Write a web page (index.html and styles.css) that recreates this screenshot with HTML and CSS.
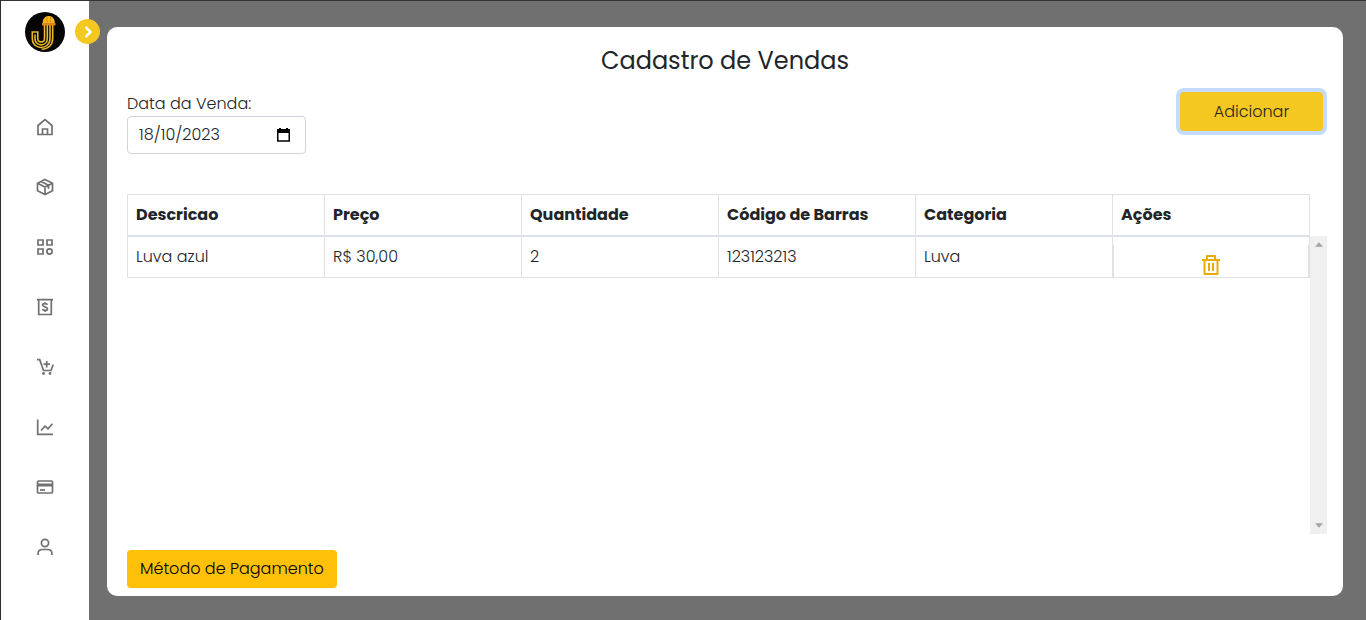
FILE: index.html
```html
<!DOCTYPE html>
<html lang="pt-BR">
<head>
<meta charset="utf-8">
<meta name="viewport" content="width=device-width, initial-scale=1">
<title>Cadastro de Vendas</title>
<link rel="stylesheet" href="styles.css">
</head>
<body>
<div class="app">
  <aside class="sidebar">
    <svg class="logo" viewBox="0 0 40 40" role="img" aria-label="Logotipo">
      <circle cx="20" cy="20" r="20" fill="#050505"/>
      <g fill="none" stroke="#e9b824" stroke-width="1.6">
        <path d="M19.500 13v13.500c0 4.500-6.700 4.500-6.700 0V20H7.300v6.500c0 12 17.700 12 17.700 0V13"/>
        <path d="M22.300 13v13.500c0 8.500-12.300 8.500-12.300 0V22.500"/>
        <path d="M27.700 13v13.500c0 6.500-4.500 10.500-11 10.700"/>
      </g>
      <path d="M17.600 11.500C17.600 6 20.500 4 23.700 4s6.100 2 6.100 7.500z" fill="#f5b51c"/>
      <path d="M22 4.500v6M25.500 4.500v6" stroke="#d98b1b" stroke-width="1"/>
      <path d="M17 11h13.500v2.500H17z" fill="#d98522"/>
    </svg>
    <button class="toggle" type="button" aria-label="Expandir menu">
      <svg viewBox="0 0 24 24"><path d="M9 6l6 6-6 6" fill="none" stroke="#fff" stroke-width="3"/></svg>
    </button>
    <nav class="menu" aria-label="Principal">
      <a href="#" aria-label="Início"><svg viewBox="0 0 18 18"><path d="M2 7.500 9 1.500l7 6v9H2zM6.500 16.500V11h5v5.500"/></svg></a>
      <a href="#" aria-label="Produtos"><svg viewBox="0 0 18 18"><path d="m9 1.500 7.500 3.700v7.600L9 16.500l-7.500-3.700V5.200zM1.500 5.200 9 9l7.500-3.800M9 9v7.500M5 3.400l7.500 3.800v3.500"/></svg></a>
      <a href="#" aria-label="Categorias"><svg viewBox="0 0 18 18"><path d="M2 2h5v5H2zM11 2h5v5h-5zM2 11h5v5H2z"/><circle cx="13.500" cy="13.500" r="2.600"/></svg></a>
      <a href="#" aria-label="Caixa"><svg viewBox="0 0 18 18"><path d="M1 1.700h16M2.700 1.700v14.800h12.600V1.700M11.400 6.800c-.4-1.700-4.800-1.600-4.800.3 0 2.100 4.900 1.500 4.900 3.800 0 2-4.500 2-5.100.1M9 4.200v1.500M9 12.400v1.500"/></svg></a>
      <a href="#" aria-label="Vendas"><svg viewBox="0 0 18 18"><path d="M1 1.700h2.700l3.800 10.800H15l2.200-6M10.700 3v6.500M7.500 6.200h6.500"/><circle class="solid" cx="7.500" cy="15.500" r="1.400"/><circle class="solid" cx="14" cy="15.500" r="1.400"/></svg></a>
      <a href="#" aria-label="Relatórios"><svg viewBox="0 0 18 18"><path d="M1.700 1.500v14.800H17M5 12.500l4-4.300 3 2.500 4.500-5"/></svg></a>
      <a href="#" aria-label="Pagamentos"><svg viewBox="0 0 18 18"><rect x="1.500" y="3" width="15" height="12" rx="1"/><path d="M4 12h5"/><path class="solid" d="M1.500 5.500h15v3h-15z"/></svg></a>
      <a href="#" aria-label="Usuário"><svg viewBox="0 0 18 18"><circle cx="9" cy="5" r="3.600"/><path d="M2 17v-1c0-3 2-4.500 4.500-4.500h5c2.500 0 4.500 1.500 4.500 4.500v1"/></svg></a>
    </nav>
  </aside>
  <main class="panel">
    <h1 class="title">Cadastro de Vendas</h1>
    <div class="toolbar">
      <div class="field">
        <label for="sale-date">Data da Venda:</label>
        <div class="date-box">
          <input id="sale-date" type="text" value="18/10/2023">
          <button class="calendar" type="button" aria-label="Abrir calendário">
            <svg viewBox="0 0 15 16"><path d="M1.750 3h11.500v11H1.750z" fill="none" stroke="#000" stroke-width="1.500"/><path d="M1 2h13v4H1zM3 1h2v2H3zM10 1h2v2h-2z"/></svg>
          </button>
        </div>
      </div>
      <button class="add" type="button">Adicionar</button>
    </div>
    <div class="list">
      <div class="table-area">
        <table class="sales">
          <thead>
            <tr><th scope="col">Descricao</th><th scope="col">Preço</th><th scope="col">Quantidade</th><th scope="col">Código de Barras</th><th scope="col">Categoria</th><th scope="col">Ações</th></tr>
          </thead>
          <tbody>
            <tr><td>Luva azul</td><td>R$ 30,00</td><td>2</td><td>123123213</td><td>Luva</td>
              <td class="actions"><div class="action-box"><button class="remove" type="button" aria-label="Excluir"><svg viewBox="0 0 20 22"><path d="M1 6h18M6 6V2h8v4M3.500 6v14h13V6M8 9v8M12 9v8" fill="none" stroke="#e9ab08" stroke-width="2" stroke-linejoin="round"/></svg></button></div></td></tr>
          </tbody>
        </table>
      </div>
      <div class="scrollbar" aria-hidden="true">
        <svg viewBox="0 0 9 5"><path d="M0 5 4.500 0 9 5z"/></svg>
        <svg viewBox="0 0 9 5"><path d="m0 0 4.500 5L9 0z"/></svg>
      </div>
    </div>
    <button class="payment" type="button">Método de Pagamento</button>
  </main>
</div>
</body>
</html>
```
FILE: styles.css
```css
* { box-sizing: border-box; }
body {
  margin: 0;
  background: #707070;
  color: #212529;
  font: 300 16px/24px Poppins, Inter, "Open Sans", sans-serif;
}
button, input { font: inherit; color: inherit; }
button { padding: 0; border: 0; cursor: pointer; }
svg { display: block; }
.app {
  display: flex;
  min-height: 100vh;
  border-top: 1px solid #343539;
  border-left: 1px solid #292d32;
}
.sidebar {
  position: relative;
  flex: none;
  width: 88px;
  padding-top: 11px;
  background: #fff;
}
.logo { width: 40px; height: 40px; margin: 0 auto; }
.toggle {
  position: absolute;
  top: 18px;
  right: -11px;
  width: 25px;
  height: 25px;
  border-radius: 50%;
  background: #f4c721;
}
.toggle svg { width: 20px; height: 20px; margin: 0 auto; }
.menu {
  display: flex;
  flex-direction: column;
  align-items: center;
  gap: 40px;
  margin-top: 65px;
}
.menu a { padding: 1px; }
.menu svg {
  width: 18px;
  height: 18px;
  fill: none;
  stroke: #707070;
  stroke-width: 1.7;
}
.menu .solid { fill: #707070; stroke: none; }
.panel {
  flex: 1;
  min-width: 0;
  display: flex;
  flex-direction: column;
  margin: 26px 23px 24px 18px;
  padding: 18px 16px 8px 20px;
  border-radius: 10px;
  background: #fff;
}
.title {
  margin: 0;
  padding-right: 4px;
  font-size: 24px;
  font-weight: 400;
  line-height: 32px;
  text-align: center;
}
.toolbar {
  display: flex;
  justify-content: space-between;
  align-items: flex-start;
  padding-top: 15px;
}
.field label { display: block; }
.date-box {
  display: flex;
  align-items: center;
  width: 179px;
  height: 38px;
  padding: 0 14px 0 11px;
  border: 1px solid #ced4da;
  border-radius: 4px;
}
.date-box input {
  flex: 1;
  min-width: 0;
  padding: 0;
  border: 0;
  outline: 0;
  background: transparent;
}
.calendar { background: none; }
.calendar svg { width: 15px; height: 16px; }
.add {
  width: 143px;
  height: 39px;
  margin-right: 4px;
  border-radius: 4px;
  background: #f4c721;
  box-shadow: 0 0 0 4px #c2dbfe;
}
.list { flex: 1; display: flex; margin-top: 40px; }
.table-area { flex: 1; min-width: 0; }
.sales {
  width: 100%;
  table-layout: fixed;
  border-collapse: collapse;
}
.sales th, .sales td {
  height: 41px;
  padding: 8px;
  border: 1px solid #dee2e6;
  text-align: left;
}
.sales th { font-weight: 700; border-bottom-width: 2px; }
.sales .actions { padding: 8px 0 0; }
.action-box {
  display: flex;
  justify-content: center;
  align-items: flex-end;
  height: 32px;
  padding-bottom: 1px;
  border: solid #dee2e6;
  border-width: 0 1px;
}
.remove { background: none; }
.remove svg { width: 20px; height: 22px; }
.scrollbar {
  flex: none;
  display: flex;
  flex-direction: column;
  justify-content: space-between;
  align-items: center;
  width: 17px;
  margin-top: 42px;
  padding: 6px 0;
  background: #f0f0f0;
}
.scrollbar svg { width: 8px; height: 5px; fill: #a3a3a3; }
.payment {
  align-self: flex-start;
  height: 38px;
  margin-top: 16px;
  padding: 0 13px;
  border-radius: 4px;
  background: #ffc107;
  color: #000;
}
```
